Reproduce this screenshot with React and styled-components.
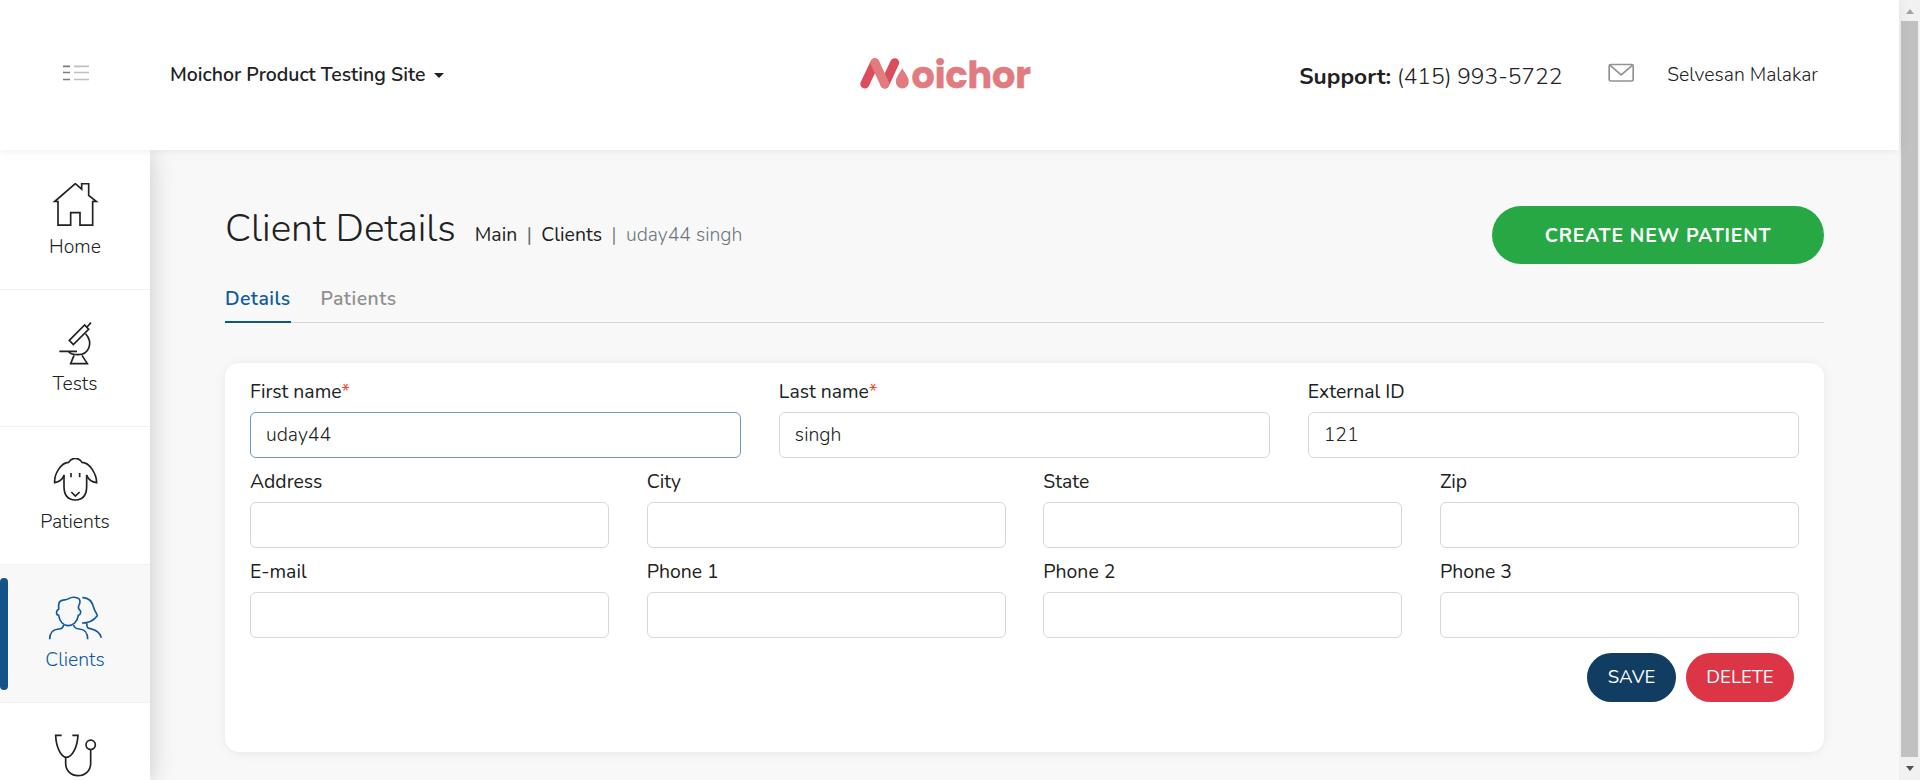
import React from "react";
import styled, { createGlobalStyle } from "styled-components";

const GlobalStyle = createGlobalStyle`
  * { box-sizing: border-box; }
  html, body { margin: 0; padding: 0; height: 100%; overflow: hidden; }
  body {
    background: #f8f8f8;
    color: #212121;
    font-family: Nunito, Lato, "Open Sans", sans-serif;
    font-size: 19.4px;
    line-height: 24px;
  }
  input, button { font-family: inherit; font-size: inherit; line-height: inherit; }
`;

const Window = styled.div`
  display: flex;
  width: 1920px;
  height: 780px;
  overflow: hidden;
`;

const Page = styled.div`
  display: flex;
  flex-direction: column;
  width: 1899px;
  height: 100%;
`;

const Header = styled.header`
  position: relative;
  z-index: 3;
  display: grid;
  grid-template-columns: 1fr auto 1fr;
  align-items: center;
  flex: none;
  height: 150px;
  padding: 0 81px 1px 63px;
  background: #fff;
  box-shadow: 0 1px 15px rgba(0, 0, 0, 0.04), 0 1px 6px rgba(0, 0, 0, 0.04);
`;

const HeaderLeft = styled.div`
  display: flex;
  align-items: center;
`;

const HeaderRight = styled.div`
  display: flex;
  align-items: center;
  justify-content: flex-end;
`;

const MenuButton = styled.button`
  display: flex;
  padding: 0;
  border: 0;
  background: none;
  margin: 0 80px 3px 0;
`;

const SiteSelect = styled.div`
  display: flex;
  align-items: center;
  gap: 9px;
  font-size: 19.5px;
  font-weight: 600;
  white-space: nowrap;
`;

const Caret = styled.span`
  margin-top: 2px;
  border: 5px solid transparent;
  border-top-color: #212121;
  border-bottom: 0;
`;

const LogoSvg = styled.svg`
  display: block;
  margin: 0 0 2px 9px;
  overflow: visible;
`;

const Support = styled.div`
  padding-top: 4px;
  margin-right: 46px;
  font-size: 22.75px;
  font-weight: 300;
  line-height: 28px;
  white-space: nowrap;
`;

const SupportLabel = styled.strong`
  font-weight: 700;
`;

const MailSvg = styled.svg`
  display: block;
  margin: 0 32px 3px 0;
`;

const UserName = styled.span`
  font-weight: 300;
`;

const Body = styled.div`
  display: flex;
  flex: 1;
  min-height: 0;
`;

const Sidebar = styled.nav`
  position: relative;
  z-index: 2;
  flex: none;
  width: 150px;
  height: 630px;
  padding-top: 2px;
  background: #fff;
  box-shadow: 0 4px 30px rgba(0, 0, 0, 0.1), 0 3px 20px rgba(0, 0, 0, 0.1);
`;

const NavItem = styled.a`
  position: relative;
  display: flex;
  flex-direction: column;
  align-items: center;
  height: 137.7px;
  padding-top: 31px;
  border-bottom: 1px solid #f1f1f1;
  background: ${(p) => (p.$active ? "#f8f8f8" : "transparent")};
  color: ${(p) => (p.$active ? "#0f5a9c" : "#212121")};

  &::before {
    content: "";
    display: ${(p) => (p.$active ? "block" : "none")};
    position: absolute;
    left: 0;
    top: 13px;
    width: 8px;
    height: 112px;
    border-radius: 4px;
    background: #145388;
  }
`;

const NavIcon = styled.svg`
  display: block;
  flex: none;
  fill: none;
  stroke: currentColor;
  stroke-width: 5;
`;

const NavLabel = styled.span`
  margin-top: 7.5px;
  font-weight: 300;
`;

const Main = styled.main`
  flex: 1;
  padding: 56px 75px 0;
`;

const TitleRow = styled.div`
  display: flex;
  align-items: flex-start;
  justify-content: space-between;
  height: 76px;
`;

const TitleGroup = styled.div`
  display: flex;
  align-items: baseline;
  padding-top: 1px;
`;

const Title = styled.h1`
  margin: 0 19px 0 0;
  font-size: 38.8px;
  line-height: 44px;
  font-weight: 300;
`;

const Breadcrumb = styled.div`
  display: flex;
`;

const Crumb = styled.span`
  color: ${(p) => (p.$current ? "#6c757d" : "#212121")};
  font-weight: ${(p) => (p.$current ? 300 : 400)};

  &:not(:first-child)::before {
    content: "|";
    padding: 0 9.5px;
    color: #6c6c6c;
  }
`;

const CreateButton = styled.button`
  width: 332px;
  height: 58px;
  padding: 1px 0 0;
  border: 0;
  border-radius: 29px;
  background: #28a745;
  color: #fff;
  font-weight: 700;
  letter-spacing: 0.8px;
`;

const Tabs = styled.div`
  display: flex;
  gap: 30px;
  height: 41px;
  margin-bottom: 40px;
  border-bottom: 1px solid #d5d7d9;
`;

const Tab = styled.a`
  height: 41px;
  padding-top: 5px;
  border-bottom: 2px solid ${(p) => (p.$active ? "#145388" : "transparent")};
  color: ${(p) => (p.$active ? "#0f5a9c" : "#909090")};
  font-weight: 600;
  letter-spacing: 0.45px;
`;

const Card = styled.form`
  height: 389px;
  padding: 17px 25px 0;
  border-radius: 14px;
  background: #fff;
  box-shadow: 0 1px 15px rgba(0, 0, 0, 0.04), 0 1px 6px rgba(0, 0, 0, 0.04);
`;

const FieldRow = styled.div`
  display: grid;
  grid-template-columns: repeat(${(p) => p.$columns}, 1fr);
  column-gap: 37.6px;
  height: 90px;
`;

const Field = styled.label`
  display: flex;
  flex-direction: column;
  min-width: 0;
`;

const Required = styled.span`
  color: #e8512f;
`;

const Input = styled.input`
  height: 46px;
  width: 100%;
  margin-top: 8px;
  padding: 0 15px 1px;
  border: 1px solid ${(p) => (p.$focused ? "#6c98bf" : "#d7d7d7")};
  border-radius: 6px;
  outline: 0;
  background: #fff;
  color: #212121;
  font-weight: 300;
`;

const Actions = styled.div`
  display: flex;
  justify-content: flex-end;
  gap: 10px;
  padding: 3px 5px 0 0;
`;

const ActionButton = styled.button`
  width: ${(p) => (p.$danger ? 108 : 89)}px;
  height: 49px;
  padding: 0 0 1px;
  border: 0;
  border-radius: 24.5px;
  background: ${(p) => (p.$danger ? "#dc3545" : "#113d63")};
  color: #fff;
  font-size: 18.6px;
`;

const Scrollbar = styled.div`
  display: flex;
  flex-direction: column;
  align-items: center;
  flex: none;
  width: 21px;
  height: 100%;
  background: #f1f1f1;
`;

const ScrollArrow = styled.span`
  display: flex;
  align-items: center;
  justify-content: center;
  height: ${(p) => (p.$up ? 21 : 23)}px;

  &::before {
    content: "";
    border: 4.5px solid transparent;
    ${(p) =>
      p.$up
        ? "border-bottom: 5px solid #a3a3a3; border-top: 0; margin-top: 2px;"
        : "border-top: 5px solid #505050; border-bottom: 0;"}
  }
`;

const ScrollThumb = styled.span`
  width: 17px;
  height: 736px;
  background: #c1c1c1;
`;

function Logo() {
  return (
    <LogoSvg width="171" height="34" viewBox="859 56 171 34">
      <g fill="none" strokeWidth="9" strokeLinecap="round">
        <path d="M863.8 83L873.9 61.7" stroke="#d94d5d" />
        <path d="M883.8 83L893.7 61.7" stroke="#d94d5d" />
        <path d="M873.9 61.7L883.8 83" stroke="#e17b80" />
      </g>
      <path
        d="M901.3 67.3C903.6 71.8 907.8 76.2 907.8 80.8A6.5 6.8 0 0 1 894.8 80.8C894.8 76.2 899 71.8 901.3 67.3Z"
        fill="#e17b80"
      />
      <text
        x="910.4"
        y="87.2"
        textLength="119.5"
        lengthAdjust="spacingAndGlyphs"
        fontFamily="Poppins, Lato, sans-serif"
        fontWeight="700"
        fontSize="37"
        fill="#e17b80"
        stroke="#e17b80"
        strokeWidth="0.5"
      >
        oichor
      </text>
    </LogoSvg>
  );
}

const navItems = [
  {
    label: "Home",
    view: "135 549 180 132",
    icon: (
      <path d="M226 551L164 604.500H174V675.500H212V638H240V675.500H278V604.500H289L266 586V551H245V567.500Z" />
    ),
  },
  {
    label: "Tests",
    view: "135 512 180 132",
    icon: (
      <>
        <path d="M208 570L220 583L266 537L254 524Z" />
        <path d="M261 530L273 517M257 550C280 577 268 613 234 613C220 613 211 610 206 604M178 603H231" />
        <path d="M222 615L212 640H262L246 615" />
      </>
    ),
  },
  {
    label: "Patients",
    view: "135 145 180 132",
    icon: (
      <>
        <path d="M192 197C187 211 177 217 164 219C162 194 183 158 206 158C216 142 236 142 246 158C269 158 290 194 290 219C276 217 266 211 260 197" />
        <path d="M192 195V230C192 257 204 271 226 271C248 271 260 257 260 230V195" />
        <path d="M213 190V203M239 190V203M214 247L226 259L239 247" />
      </>
    ),
  },
  {
    label: "Clients",
    active: true,
    view: "135 558 180 132",
    icon: (
      <>
        <path d="M176 598V585Q177 573 186 571C196 569 200 570 206 566C214 561 227 562 233 564C241 567 241 576 238 583C233 591 235 595 238 599C244 602 243 615 235 616C232 636 219 647 205 647C191 647 179 636 176 616C168 615 167 602 176 598Z" />
        <path d="M190 645C190 652 188 657 176 657C158 658 149 667 149 688M221 645C222 652 227 656 238 657C256 658 263 667 263 688" />
        <path d="M247 563C270 562 278 579 282 595C284 604 292 612 292 617C283 629 267 639 246 639M260 640C261 650 261 655 271 656C289 660 300 668 304 683" />
      </>
    ),
  },
  {
    view: "135 971 180 132",
    icon: (
      <>
        <path d="M185 975H167C168 1010 183 1041 199 1041C217 1041 232 1010 234 975H217" />
        <path d="M197 1041V1059C197 1082 214 1096 234 1096C255 1096 272 1082 272 1059V1018" />
        <circle cx="272" cy="1003.500" r="14" />
      </>
    ),
  },
];

const fieldRows = [
  [
    { label: "First name", required: true, value: "uday44", focused: true },
    { label: "Last name", required: true, value: "singh" },
    { label: "External ID", value: "121" },
  ],
  [{ label: "Address" }, { label: "City" }, { label: "State" }, { label: "Zip" }],
  [{ label: "E-mail" }, { label: "Phone 1" }, { label: "Phone 2" }, { label: "Phone 3" }],
];

export default function App() {
  return (
    <Window>
      <GlobalStyle />
      <Page>
        <Header>
          <HeaderLeft>
            <MenuButton>
              <svg width="27" height="16" viewBox="0 0 27 16" fill="none" strokeWidth="1.700">
                <path d="M0 1.300H7M0 7.500H7M0 14.500H7" stroke="#7d7d7d" />
                <path d="M11 1.300H26M11 7.500H26M11 14.500H26" stroke="#c0c0c0" />
              </svg>
            </MenuButton>
            <SiteSelect>
              Moichor Product Testing Site
              <Caret />
            </SiteSelect>
          </HeaderLeft>
          <Logo />
          <HeaderRight>
            <Support>
              <SupportLabel>Support:</SupportLabel> (415) 993-5722
            </Support>
            <MailSvg width="27" height="20" viewBox="0 0 27 20" fill="none" stroke="#929292" strokeWidth="1.700">
              <rect x="1.200" y="1.500" width="24" height="16.500" rx="1.500" />
              <path d="M1.800 2.200L13.200 12L24.600 2.200" />
            </MailSvg>
            <UserName>Selvesan Malakar</UserName>
          </HeaderRight>
        </Header>
        <Body>
          <Sidebar>
            {navItems.map((item) => (
              <NavItem key={item.view} $active={item.active}>
                <NavIcon width="60" height="44" viewBox={item.view}>
                  {item.icon}
                </NavIcon>
                {item.label && <NavLabel>{item.label}</NavLabel>}
              </NavItem>
            ))}
          </Sidebar>
          <Main>
            <TitleRow>
              <TitleGroup>
                <Title>Client Details</Title>
                <Breadcrumb>
                  <Crumb>Main</Crumb>
                  <Crumb>Clients</Crumb>
                  <Crumb $current>uday44 singh</Crumb>
                </Breadcrumb>
              </TitleGroup>
              <CreateButton type="button">CREATE NEW PATIENT</CreateButton>
            </TitleRow>
            <Tabs>
              <Tab $active>Details</Tab>
              <Tab>Patients</Tab>
            </Tabs>
            <Card>
              {fieldRows.map((row) => (
                <FieldRow key={row[0].label} $columns={row.length}>
                  {row.map((field) => (
                    <Field key={field.label}>
                      <span>
                        {field.label}
                        {field.required && <Required>*</Required>}
                      </span>
                      <Input defaultValue={field.value} $focused={field.focused} />
                    </Field>
                  ))}
                </FieldRow>
              ))}
              <Actions>
                <ActionButton type="button">SAVE</ActionButton>
                <ActionButton type="button" $danger>
                  DELETE
                </ActionButton>
              </Actions>
            </Card>
          </Main>
        </Body>
      </Page>
      <Scrollbar>
        <ScrollArrow $up />
        <ScrollThumb />
        <ScrollArrow />
      </Scrollbar>
    </Window>
  );
}
